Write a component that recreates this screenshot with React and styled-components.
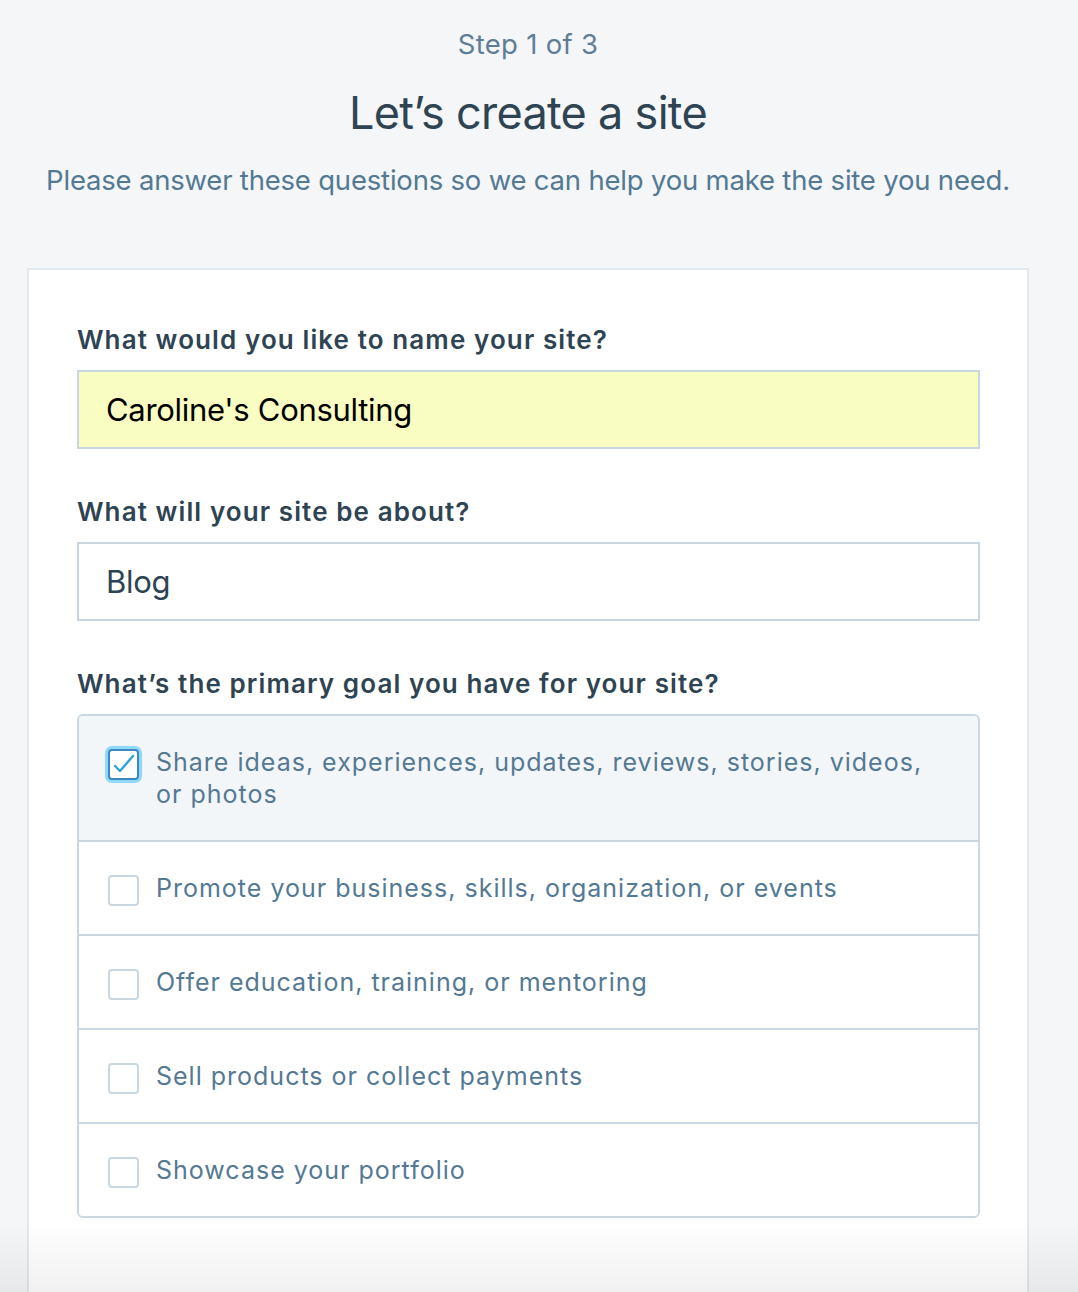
import React from "react";
import styled, { createGlobalStyle } from "styled-components";

const Global = createGlobalStyle`
  html, body { margin: 0; padding: 0; background: #f4f6f8; }
  body { font-family: Inter, "Noto Sans", sans-serif; -webkit-font-smoothing: antialiased; }
  * { box-sizing: border-box; }
`;

const Page = styled.div`
  width: 1002px;
  margin-left: 27px;
  padding-top: 26px;
`;

const Step = styled.div`
  text-align: center;
  font-size: 27.5px;
  line-height: 36px;
  color: #5e7e97;
  letter-spacing: 0.3px;
`;

const Title = styled.h1`
  margin: 23px 0 0;
  text-align: center;
  font-size: 45px;
  line-height: 56px;
  font-weight: 400;
  color: #2e4453;
  letter-spacing: -0.7px;
`;

const Subtitle = styled.p`
  margin: 21px 0 0;
  text-align: center;
  font-size: 27.5px;
  line-height: 36px;
  color: #537994;
  letter-spacing: -0.2px;
`;

const Card = styled.section`
  margin-top: 70px;
  background: #fff;
  border: 2px solid #e1e8ee;
  border-bottom: none;
  padding: 52px 47px 120px 48px;
`;

const Label = styled.label`
  display: block;
  font-size: 26px;
  line-height: 36px;
  font-weight: 600;
  color: #2e4453;
  margin-bottom: 12px;
  letter-spacing: 1.1px;
`;

const Field = styled.div`
  margin-bottom: 45px;
`;

const Input = styled.input`
  display: block;
  width: 100%;
  height: 79px;
  border: 2px solid #c8d7e1;
  border-radius: 0;
  padding: 0 27px;
  font-family: Inter, "Noto Sans", sans-serif;
  font-size: 31px;
  color: ${(p) => (p.$autofill ? "#000" : "#2e4453")};
  background: ${(p) => (p.$autofill ? "#fafdc2" : "#fff")};
  outline: none;
  letter-spacing: -0.3px;
`;

const Options = styled.div`
  border: 2px solid #c8d7e1;
  border-radius: 6px;
  overflow: hidden;
`;

const Option = styled.label`
  display: flex;
  align-items: flex-start;
  gap: 17px;
  padding: 30px 29px;
  background: ${(p) => (p.$checked ? "#f3f6f8" : "#fff")};
  & + & { border-top: 2px solid #c8d7e1; }
`;

const Box = styled.span`
  flex: none;
  width: 31px;
  height: 31px;
  margin: 3px 0 -3px;
  border-radius: 4px;
  border: 2px solid ${(p) => (p.$checked ? "#3d87c2" : "#c8d7e1")};
  background: #fff;
  box-shadow: ${(p) => (p.$checked ? "0 0 0 3px #8ed8f8" : "none")};
  display: flex;
  align-items: center;
  justify-content: center;
`;

const OptionText = styled.span`
  font-size: 25px;
  line-height: 32px;
  color: #537994;
  letter-spacing: 1px;
`;

const Fade = styled.div`
  position: fixed;
  left: 0;
  right: 0;
  bottom: 0;
  height: 72px;
  background: linear-gradient(rgba(0, 0, 0, 0), rgba(0, 0, 0, 0.055));
  pointer-events: none;
`;

const options = [
  "Share ideas, experiences, updates, reviews, stories, videos, or photos",
  "Promote your business, skills, organization, or events",
  "Offer education, training, or mentoring",
  "Sell products or collect payments",
  "Showcase your portfolio",
];

export default function App() {
  return (
    <>
      <Global />
      <Page>
        <Step>Step 1 of 3</Step>
        <Title>Let’s create a site</Title>
        <Subtitle>Please answer these questions so we can help you make the site you need.</Subtitle>
        <Card>
          <Field>
            <Label>What would you like to name your site?</Label>
            <Input $autofill defaultValue="Caroline's Consulting" />
          </Field>
          <Field>
            <Label>What will your site be about?</Label>
            <Input defaultValue="Blog" />
          </Field>
          <Label>What’s the primary goal you have for your site?</Label>
          <Options>
            {options.map((o, i) => (
              <Option key={o} $checked={i === 0}>
                <Box $checked={i === 0}>
                  {i === 0 && (
                    <svg width="25" height="25" viewBox="0 0 25 25">
                      <polyline points="4,14 9,19 22,4" fill="none" stroke="#2ba3dc" strokeWidth="2.4" strokeLinecap="round" strokeLinejoin="round" />
                    </svg>
                  )}
                </Box>
                <OptionText>{o}</OptionText>
              </Option>
            ))}
          </Options>
        </Card>
      </Page>
      <Fade />
    </>
  );
}
